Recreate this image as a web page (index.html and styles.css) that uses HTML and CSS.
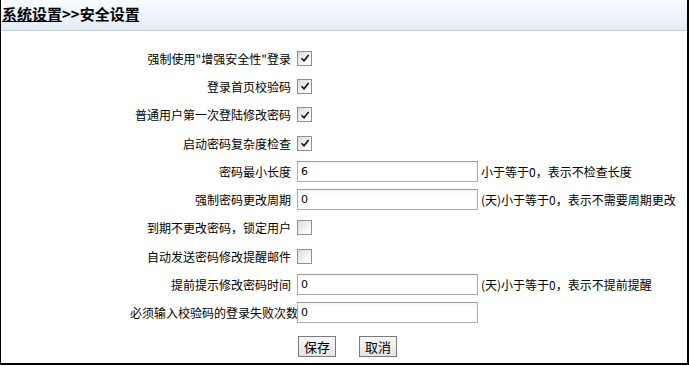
FILE: index.html
```html
<!DOCTYPE html>
<html>
<head>
<meta charset="utf-8">
<link rel="stylesheet" href="styles.css">
</head>
<body>
<div class="panel">
  <div class="header">
    <span class="title"><a class="crumb">系统设置</a>&gt;&gt;安全设置</span>
  </div>
  <div class="form">
    <div class="label">强制使用"增强安全性"登录</div>
    <div class="ctrl"><span class="cb on"><svg viewBox="0 0 12 12" width="12" height="12"><path d="M2.5 6.2 L5 8.7 L9.6 3" fill="none" stroke="#111" stroke-width="1.6"/></svg></span></div>

    <div class="label">登录首页校验码</div>
    <div class="ctrl"><span class="cb on"><svg viewBox="0 0 12 12" width="12" height="12"><path d="M2.5 6.2 L5 8.7 L9.6 3" fill="none" stroke="#111" stroke-width="1.6"/></svg></span></div>

    <div class="label">普通用户第一次登陆修改密码</div>
    <div class="ctrl"><span class="cb on"><svg viewBox="0 0 12 12" width="12" height="12"><path d="M2.5 6.2 L5 8.7 L9.6 3" fill="none" stroke="#111" stroke-width="1.6"/></svg></span></div>

    <div class="label">启动密码复杂度检查</div>
    <div class="ctrl"><span class="cb on"><svg viewBox="0 0 12 12" width="12" height="12"><path d="M2.5 6.2 L5 8.7 L9.6 3" fill="none" stroke="#111" stroke-width="1.6"/></svg></span></div>

    <div class="label">密码最小长度</div>
    <div class="ctrl"><span class="input">6</span><span class="hint">小于等于0，表示不检查长度</span></div>

    <div class="label">强制密码更改周期</div>
    <div class="ctrl"><span class="input">0</span><span class="hint">(天)小于等于0，表示不需要周期更改</span></div>

    <div class="label">到期不更改密码，锁定用户</div>
    <div class="ctrl"><span class="cb"></span></div>

    <div class="label">自动发送密码修改提醒邮件</div>
    <div class="ctrl"><span class="cb"></span></div>

    <div class="label">提前提示修改密码时间</div>
    <div class="ctrl"><span class="input">0</span><span class="hint">(天)小于等于0，表示不提前提醒</span></div>

    <div class="label tight">必须输入校验码的登录失败次数</div>
    <div class="ctrl"><span class="input">0</span></div>

    <div class="label"></div>
    <div class="ctrl buttons"><span class="btn">保存</span><span class="btn">取消</span></div>
  </div>
</div>
</body>
</html>
```

FILE: styles.css
```css
html, body {
  margin: 0;
  padding: 0;
  background: #fff;
}
body {
  font-family: "Noto Sans CJK SC", "Liberation Sans", sans-serif;
  font-size: 12px;
  color: #000;
}
.panel {
  width: 686px;
  height: 363px;
  border-left: 1px solid #000;
  border-right: 2px solid #000;
  border-bottom: 2px solid #000;
  overflow: hidden;
}
.header {
  height: 30px;
  border-bottom: 1px solid #c4ccd4;
  background: linear-gradient(#f8fcff 0%, #eef5fc 40%, #e2ebf5 100%);
  display: flex;
  align-items: center;
  padding-left: 1px;
}
.title {
  font-size: 15px;
  font-weight: bold;
  line-height: 18px;
  margin-top: -3px;
}
.crumb {
  color: #000;
  text-decoration: underline;
}
.form {
  display: grid;
  grid-template-columns: 296px 1fr;
  grid-auto-rows: 28.3px;
  margin-top: 13px;
}
.label {
  display: flex;
  align-items: center;
  justify-content: flex-end;
  padding-right: 6px;
  white-space: nowrap;
}
.label.tight {
  padding-right: 0;
  margin-right: -1px;
}
.ctrl {
  display: flex;
  align-items: center;
  gap: 3px;
}
.cb {
  width: 13px;
  height: 13px;
  border: 1px solid #8e8f8f;
  background: linear-gradient(135deg, #dcdcdc 0%, #f4f4f4 60%, #fff 100%);
  display: inline-flex;
  align-items: center;
  justify-content: center;
}
.input {
  box-sizing: border-box;
  width: 181px;
  height: 21px;
  border: 1px solid #ababab;
  border-top-color: #9c9c9c;
  background: linear-gradient(#f4f4f4 0px, #fff 4px);
  font-family: "DejaVu Sans", sans-serif;
  font-size: 11px;
  line-height: 19px;
  padding-left: 3px;
}
.hint {
  white-space: nowrap;
}
.buttons {
  gap: 23px;
  padding-left: 1px;
  margin-top: 10px;
}
.btn {
  box-sizing: border-box;
  width: 38px;
  height: 21px;
  border: 1px solid #7a7a7a;
  background: linear-gradient(#f7f7f7, #e4e4e4);
  display: inline-flex;
  align-items: center;
  justify-content: center;
  font-size: 13px;
}
```
